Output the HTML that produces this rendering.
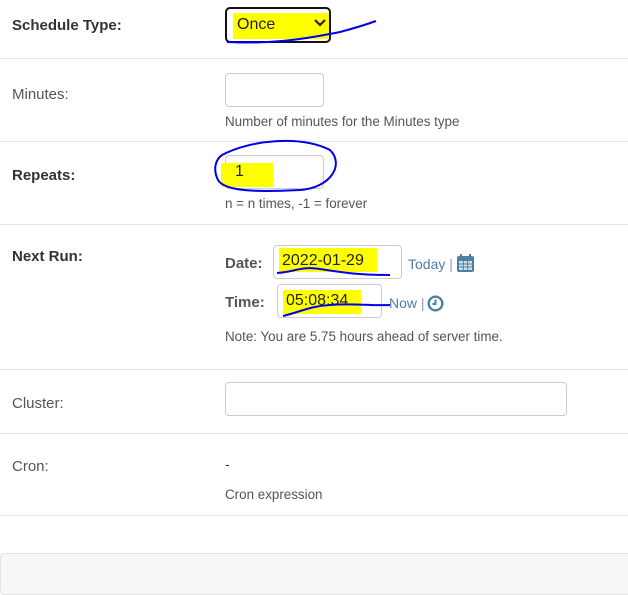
<!DOCTYPE html>
<html><head><meta charset="utf-8"><style>
body{margin:0;width:628px;height:580px;position:relative;background:#fff;font-family:"Liberation Sans",sans-serif;font-size:14px;color:#333;overflow:hidden}
.a{position:absolute}
.hr{position:absolute;left:0;width:628px;height:1px;background:#e3e3e3}
.lbl{position:absolute;left:12px;font-size:15px;color:#333}
.b{font-weight:bold}
.g{color:#555}
.inp{position:absolute;border:1px solid #ccc;border-radius:4px;background:#fff}
.help{position:absolute;font-size:13.4px;color:#555}
.hl{position:absolute;background:#ffff00}
.lnk{position:absolute;font-size:14px;color:#4f7fa0}
</style></head><body>
<div class="lbl b" style="top:17px">Schedule Type:</div>
<div class="a" style="left:225px;top:7px;width:106px;height:36px;border:2px solid #111;border-radius:5px;box-sizing:border-box"></div>
<div class="hl" style="left:233px;top:13px;width:96px;height:26px"></div>
<div class="a" style="left:237px;top:16px;font-size:16px;color:#222">Once</div>
<svg class="a" style="left:313px;top:18px" width="14" height="10"><path d="M2 2 L7 7 L12 2" stroke="#222" stroke-width="2.2" fill="none"/></svg>
<div class="hr" style="top:58px"></div>

<div class="lbl g" style="top:86px">Minutes:</div>
<div class="inp" style="left:225px;top:73px;width:97px;height:32px"></div>
<div class="help" style="left:225px;top:114px">Number of minutes for the Minutes type</div>
<div class="hr" style="top:141px"></div>

<div class="lbl b" style="top:167px">Repeats:</div>
<div class="inp" style="left:225px;top:155px;width:97px;height:32px"></div>
<div class="hl" style="left:221px;top:163px;width:52px;height:24px"></div>
<div class="a" style="left:235px;top:163px;font-size:16px;color:#222">1</div>
<div class="help" style="left:225px;top:196px">n = n times, -1 = forever</div>
<div class="hr" style="top:224px"></div>

<div class="lbl b" style="top:248px">Next Run:</div>
<div class="a b" style="left:225px;top:255px;font-size:15px;color:#555">Date:</div>
<div class="inp" style="left:273px;top:245px;width:127px;height:32px"></div>
<div class="hl" style="left:279px;top:248px;width:98px;height:24px"></div>
<div class="a" style="left:282px;top:252px;font-size:16px;color:#222">2022-01-29</div>
<div class="lnk" style="left:408px;top:256px">Today <span style="color:#999">|</span></div>
<svg class="a" style="left:456px;top:253px" width="19" height="20"><rect x="1" y="3" width="17" height="16" rx="2" fill="#4f7fa0"/><rect x="3" y="8" width="13" height="9" fill="#cfe0ea"/><path d="M7.3 8v9M11.6 8v9M3 11h13M3 14h13" stroke="#4f7fa0" stroke-width="1"/><rect x="4" y="1" width="2" height="4" fill="#4f7fa0"/><rect x="13" y="1" width="2" height="4" fill="#4f7fa0"/></svg>
<div class="a b" style="left:225px;top:294px;font-size:15px;color:#555">Time:</div>
<div class="inp" style="left:277px;top:284px;width:103px;height:32px"></div>
<div class="hl" style="left:283px;top:290px;width:78px;height:24px"></div>
<div class="a" style="left:286px;top:292px;font-size:16px;color:#222">05:08:34</div>
<div class="lnk" style="left:389px;top:295px">Now <span style="color:#999">|</span></div>
<svg class="a" style="left:427px;top:295px" width="17" height="17"><circle cx="8.5" cy="8.5" r="6.8" stroke="#4f7fa0" stroke-width="2.4" fill="#fff"/><path d="M8.5 4.5v4.5h-3" stroke="#4f7fa0" stroke-width="2" fill="none"/></svg>
<div class="help" style="left:225px;top:329px">Note: You are 5.75 hours ahead of server time.</div>
<div class="hr" style="top:369px"></div>

<div class="lbl g" style="top:395px">Cluster:</div>
<div class="inp" style="left:225px;top:382px;width:340px;height:32px"></div>
<div class="hr" style="top:433px"></div>

<div class="lbl g" style="top:458px">Cron:</div>
<div class="a" style="left:225px;top:456px;color:#333">-</div>
<div class="help" style="left:225px;top:487px">Cron expression</div>
<div class="hr" style="top:515px"></div>

<div class="a" style="left:0;top:553px;width:640px;height:40px;background:#f7f7f7;border:1px solid #e3e3e3;border-radius:4px"></div>

<svg class="a" style="left:0;top:0" width="628" height="580">
<path d="M227 42 C270 44 300 40 340 32 C355 28 365 25 376 21" stroke="#0000ee" stroke-width="2" fill="none"/>
<path d="M222 155 C250 140 300 135 330 150 C345 165 330 188 300 190 C260 192 225 192 218 180 C213 170 215 160 222 155" stroke="#0000ee" stroke-width="2" fill="none"/>
<path d="M277 273 C295 272 300 266 320 269 C340 272 355 275 390 275" stroke="#0000ee" stroke-width="2" fill="none"/>
<path d="M283 316 C300 312 310 306 330 305 C350 303 370 306 390 305" stroke="#0000ee" stroke-width="2" fill="none"/>
</svg>
</body></html>
